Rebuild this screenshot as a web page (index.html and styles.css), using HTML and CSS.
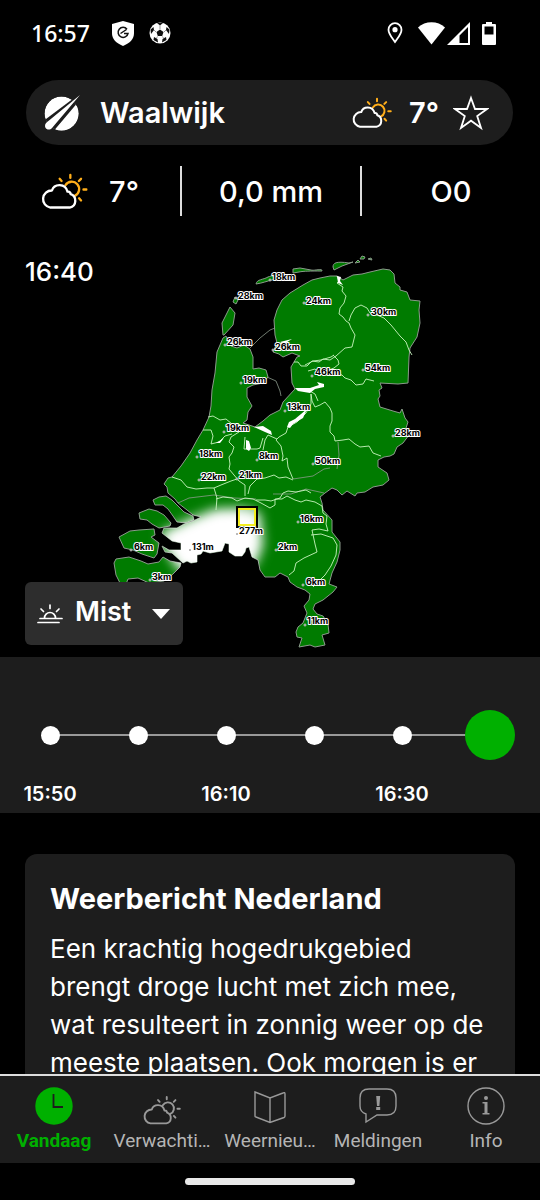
FILE: index.html
```html
<!DOCTYPE html>
<html lang="nl">
<head>
<meta charset="utf-8">
<meta name="viewport" content="width=device-width, initial-scale=1">
<title>Weer Waalwijk</title>
<link rel="stylesheet" href="styles.css">
</head>
<body>
<svg class="defs" aria-hidden="true">
  <symbol id="cloud-sun" viewBox="0 0 48 37">
    <g class="sun" fill="none" stroke-width="2.4" stroke-linecap="round"><path d="M25 12.5a7.6 7.6 0 1 1 9.500 11M30 2v3M19 6l2 2.200M41 6l-2.200 2.200M43.500 17h3M39 26l2 2.200"/></g>
    <path class="cloud" fill="none" stroke-width="2.4" stroke-linejoin="round" d="M9.500 35.500a8.800 8.800 0 0 1 1.600-17.500c2.300-7.500 13.800-7.800 16 1.200 2-.3 3 .6 3.300 2.600 6.500 2.200 6.300 12.500-1 13.700z"/>
  </symbol>
</svg>
<div class="app">
  <div class="status">
    <time class="status-time">16:57</time>
    <svg width="22" height="25" viewBox="0 0 22 25"><path fill="#fff" d="M11 0l11 3v9c0 6-4 10-11 13C4 22 0 18 0 12V3z"/><path d="M8.500 12.500l6-4M15 8.200A5 5 0 1 0 16 12.500H12" fill="none" stroke="#111" stroke-width="1.500"/></svg>
    <svg width="22" height="22" viewBox="0 0 22 22"><circle cx="11" cy="11" r="10.500" fill="#fff"/><path d="M11 7.500l3.500 2.600-1.300 4h-4.400L7.500 10.100zM8 1h6l-3 2.500zM1.500 7.500l3-2.500.5 3-3 4zM20.500 7.500l-3-2.500-.5 3 3 4zM4.500 18l.5-3 3.500 2 .5 3.500zM17.500 18l-.5-3-3.500 2-.5 3.500z" fill="#111"/><path d="M11 7V3.500M7 10L5 8M15 10l2-2M8.500 14.500L7 17M13.500 14.500L15 17" stroke="#555" stroke-width=".6"/></svg>
    <span class="spacer"></span>
    <svg width="16" height="22" viewBox="0 0 16 22"><path d="M8 1.200a6.500 6.500 0 0 0-6.500 6.500C1.500 12 5 15.500 8 20c3-4.500 6.500-8 6.500-12.300A6.500 6.500 0 0 0 8 1.200z" fill="none" stroke="#fff" stroke-width="1.800"/><circle cx="8" cy="7.700" r="2.600" fill="#fff"/></svg>
    <svg class="signals" width="52" height="23" viewBox="0 0 52 23"><path fill="#fff" d="M0 5.500C7-1.500 20-1.500 27 5.500L13.500 22.500z"/><path fill="#fff" fill-rule="evenodd" d="M52 0v23H29zM50 5L41.500 13.500V21H50z"/></svg>
    <svg width="14" height="23" viewBox="0 0 14 23"><path fill="#fff" fill-rule="evenodd" d="M4 0h6v2h3q1 0 1 1v19q0 1-1 1H1q-1 0-1-1V3q0-1 1-1h3zM2.500 4.500v8h9v-8z"/></svg>
  </div>

  <main class="content">
    <header class="place">
      <svg width="36" height="36" viewBox="0 0 36 36"><defs><clipPath id="globe"><circle cx="17.500" cy="18.500" r="17"/></clipPath></defs><g clip-path="url(#globe)"><circle cx="17.500" cy="18.500" r="17" fill="#fff"/><path d="M-2 27L34 0H40L8 38H-2z" fill="#1d1d1d"/><path d="M10 36L36 7V40H8z" fill="#fff"/></g><path d="M36 0L8 33C5.500 36 0 34.500 1.200 29.500 1.500 28 4 26.500 5 25.500z" fill="#fff"/></svg>
      <button class="place-name" type="button">Waalwijk</button>
      <svg class="icon-small" viewBox="0 0 48 37"><use href="#cloud-sun"/></svg>
      <span class="place-temp">7°</span>
      <button class="star" type="button" aria-label="Favoriet"><svg width="36" height="36" viewBox="0 0 36 36"><path d="M18 3l4 11h12l-9.800 7.100L28 33l-10-7.300L8 33l3.800-11.900L2 14h12z" fill="none" stroke="#fff" stroke-width="1.800"/></svg></button>
    </header>

    <section class="stats" aria-label="Actueel">
      <div class="stat stat-temp"><svg class="icon-large" viewBox="0 0 48 37"><use href="#cloud-sun"/></svg><span>7°</span></div>
      <div class="stat">0,0 mm</div>
      <div class="stat">O0</div>
    </section>

    <section class="map" aria-label="Zicht in Nederland">
      <time class="map-time">16:40</time>
      <svg class="map-art" viewBox="0 231 540 426">
        <defs>
          <path id="land" d="M223 338L226 336 231 346 237 348 244 345 250 349 253 357 253 369 259 368 266 370 268 377 263 383 253 385 247 388 247 397 252 406 248 412 247 420 243 423 255 427 263 421 270 415 280 410 283 402 295 389 292 383 291 367 297 357 300 356 292 353 283 357 279 354 273 352 277 343 275 335 274 320 277 310 282 300 290 293 303 285 312 280 320 278 330 276 337 276 343 280 353 275 362 274 370 272 383 269 390 270 394 274 395 283 400 287 400 290 407 292 410 300 420 301 419 310 420 323 417 337 410 348 409 357 408 383 398 384 380 383 382 388 379 390 380 396 378 399 380 407 393 411 400 413 402 409 405 418 408 422 406 428 409 435 403 443 397 447 394 454 390 456 384 457 378 460 378 467 387 473 389 480 383 485 373 487 365 492 357 493 355 496 347 491 342 495 337 490 332 488 325 493 320 497 322 503 323 510 332 520 332 532 340 542 340 550 337 562 332 573 329 584 337 587 333 592 323 600 315 604 313 609 317 614 323 616 328 624 329 633 322 635 325 645 315 647 310 645 299 647 302 638 297 637 296 632 298 627 303 623 307 613 304 606 309 600 310 594 305 590 297 587 290 582 288 577 280 573 275 577 265 577 260 570 258 560 252 557 249 547 246 548 245 552 242 556 235 556 229 552 229 544 225 543 222 551 210 553 203 551 201 554 197 555 197 562 191 563 187 561 183 563 172 553 165 552 162 546 169 550 181 550 181 543 172 541 167 537 162 533 164 528 177 528 184 524 193 521 201 517 193 515 187 510 178 503 175 499 168 493 167 487 164 484 168 478 172 477 181 466 190 453 197 440 203 430 209 417 211 406 212 390 215 373 217 352z"/>
          <path id="isles" d="M153 500l6-3 7-1 6 4 5 5 7 7 9 4 1 4-8 3-9-1-4-6-5-7-5-4-8 0zM139 513l10-4 8 2 7 4 7 8-1 3-11 2-7-4-5-4-7-1zM119 537l11-6 9-1 15-1 1 6-4 2 8 6-2 11-3 4-12-4-9-4-9-2zM114 563l2-4 13-2 12 4 7 3 11-2 4-5 7 4 11 2-1 4-7 7-9 7-15 2-11-5-10 1-2 5-6-1-4-8zM223 335l-1-12 8-16 5 6-2 12-9 10zM233 302l2-5 3 3-2 4zM256 284c1-5 7-4 12-7 3-1 14-5 16-1l-12 4c-5 1-9 3-16 4zM293 273v-4l7-1 11 2c3 1 12-2 11 1-12 0-18 0-23 1zM333 267c0-4 3-6 16-4l4-1-11 4-8 4zM355 263l3-3 2 2zM360 259l2-3 3 1-1 2zM368 259l3-1 1 2z"/>
          <clipPath id="ground"><use href="#land"/><use href="#isles"/></clipPath>
          <filter id="mist" x="-30%" y="-30%" width="160%" height="160%"><feGaussianBlur stdDeviation="6"/></filter>
        </defs>
        <g class="land"><use href="#land"/><use href="#isles"/></g>
        <g clip-path="url(#ground)"><path filter="url(#mist)" fill="#fff" d="M160 533L190 519 215 509 240 508 260 513 263 545 255 566 197 572 180 571 174 563 165 548z"/></g>
        <path class="edge" d="M250 348l10-10 10-8 5-2M267 377l9 4 4 10 1 5M273 494l18 0 15-5 18 4M293 479l20-3 11-7 6-1M338 442l1 13-2 14M178 503l11-5 25-3 20 3 22 1"/>
        <path class="border" d="M337 276l2 5-2 2 6 4-1 4 4 5-2 7-4 5-1 6 4 3 3 4 3 2 2 5 4 7-1 4-2 8-7 1-9 8-6 4-7-1-4 3-7-1-5 5-6 0-3-4-4 0M349 321l2-6 4-7 6-3 6 3 3 5 7 2 7 3 7 7 9 11 6 6 3 8 3 5M333 355l5 5 1 4-5 4-5 2 2 3 11 2 3 3 6 2 5 5 7-1 3-5 8 2M305 365l8-4 8-1 10-3 3-2M308 371l7-2 6 5M308 390l7 4 3 7M311 394l1 7 3 6 5-2 5-3 5 6 2 5 0 8-2 5 0 6 4 4 1 5 8-1 6-1 6 5 5 3 9-1 4 7 8 3M311 394l0 10-5 9-9 9-9 5-2 6-7 4-3 3 5 6 2 10-1 5 5-3 1 9 5 12M208 417l5-1 7 4 6-1 6 5 7 0 6 5M203 430l8 0 2 6-2 8 8-2 6-6 7-2M263 450l2-10 3-5 9 4M245 437l-1 12 13 0 3-1 3-10M239 432l-8 5-2 5 5 5-2 6-3 4 1 7-1 5 5 6 5 6 6 4 0 11M172 477l9 3 6 7 9 2 11-1 7 0 7-3 10-4 6-2M214 488l3 10-1 12M248 494l2-8 7-7 0-4M257 479l8-1 9-3 5 3 7-1 7 3M256 500l9 0 6 1 9-3 3-5 5-2 8 1 10-2 5 3M216 499l7-2 9 1 5 3 8-3 8 1 8 4 9 5 5-3 0-6 7 0 5-3 8 4 6 2 5-2 9 2 7 4 1 7 4 3-1 8 2 7-9-2-7 1 3 14 2 8-13 6-8 5-2 8-5 4M311 535l10-1 12 4 4 7-1 10-5 11-6 9-6 6-6 6"/>
        <path fill="#fff" d="M295 388l15 0 9-3-2-3 7 2 0 3-9 2-5 4-12-2zM254 427l9-1 8 5 1 4-7-3zM287 427l2-5 6-3 12-10-4 9-10 6-3 4zM246 440l3 1 2 7-2 3-3-2zM216 443l8-5-4 5zM337 276l4 1-1 4 3 4-5-2zM280 342l12-3-8 5z"/>
        <g class="cursor"><rect x="237" y="507" width="20" height="20" fill="#fff" fill-opacity=".45" stroke="#000" stroke-width="2"/><rect x="239" y="509" width="16" height="16"/></g>
        <g class="spots"><circle cx="270" cy="280" r="1"/><circle cx="236" cy="298" r="1"/><circle cx="304" cy="303" r="1"/><circle cx="368" cy="315" r="1"/><circle cx="225" cy="345" r="1"/><circle cx="273" cy="350" r="1"/><circle cx="363" cy="370" r="1"/><circle cx="312" cy="376" r="1"/><circle cx="241" cy="383" r="1"/><circle cx="285" cy="411" r="1"/><circle cx="224" cy="432" r="1"/><circle cx="393" cy="436" r="1"/><circle cx="197" cy="457" r="1"/><circle cx="257" cy="460" r="1"/><circle cx="313" cy="464" r="1"/><circle cx="199" cy="480" r="1"/><circle cx="237" cy="479" r="1"/><circle cx="298" cy="522" r="1"/><circle cx="237" cy="534" r="1"/><circle cx="131" cy="550" r="1"/><circle cx="190" cy="550" r="1"/><circle cx="276" cy="550" r="1"/><circle cx="303" cy="585" r="1"/><circle cx="150" cy="580" r="1"/><circle cx="305" cy="625" r="1"/></g>
        <g class="km">
          <text x="272" y="280">18km</text><text x="238" y="299">28km</text><text x="306" y="304">24km</text><text x="371" y="315">30km</text><text x="227" y="345">26km</text><text x="275" y="350">26km</text><text x="365" y="371">54km</text><text x="315" y="375">46km</text><text x="243" y="383">19km</text><text x="287" y="410">13km</text><text x="226" y="431">19km</text><text x="395" y="436">28km</text><text x="199" y="457">18km</text><text x="259" y="459">8km</text><text x="315" y="464">50km</text><text x="201" y="480">22km</text><text x="239" y="478">21km</text><text x="300" y="522">16km</text><text x="239" y="534">277m</text><text x="134" y="550">6km</text><text x="192" y="550">131m</text><text x="278" y="550">2km</text><text x="306" y="585">6km</text><text x="152" y="580">3km</text><text x="307" y="624">11km</text>
        </g>
      </svg>
      <div class="layer">
        <svg class="layer-icon" width="26" height="20" viewBox="0 0 26 20"><path d="M3 14.500h22M1 18.500h21M7.500 14a5.500 5.500 0 0 1 11 0M13 1v3.500M4 5l2.500 2.500M22 5l-2.500 2.500" fill="none" stroke="#fff" stroke-width="1.700" stroke-linecap="round"/></svg>
        <select class="layer-select" aria-label="Kaartlaag"><option>Mist</option></select>
        <svg class="layer-caret" width="18" height="10" viewBox="0 0 18 10"><path d="M0 0h18L9 10z" fill="#fff"/></svg>
      </div>
    </section>

    <fieldset class="timeline" aria-label="Tijdstip">
      <label class="step"><input type="radio" name="moment"><span>15:50</span></label>
      <label class="step"><input type="radio" name="moment" aria-label="16:00"></label>
      <label class="step"><input type="radio" name="moment"><span>16:10</span></label>
      <label class="step"><input type="radio" name="moment" aria-label="16:20"></label>
      <label class="step"><input type="radio" name="moment"><span>16:30</span></label>
      <label class="step"><input type="radio" name="moment" aria-label="16:40" checked></label>
    </fieldset>

    <article class="report">
      <h1>Weerbericht Nederland</h1>
      <p>Een krachtig hogedrukgebied brengt droge lucht met zich mee, wat resulteert in zonnig weer op de meeste plaatsen. Ook morgen is er</p>
    </article>
  </main>

  <nav class="tabs">
    <a class="tab active" href="#vandaag"><svg width="38" height="38" viewBox="0 0 38 38"><circle cx="19" cy="19" r="18.700" fill="#00b000"/><path d="M18.500 7v13H28" fill="none" stroke="#1d1d1d" stroke-width="1.800"/></svg><span>Vandaag</span></a>
    <a class="tab" href="#verwachting"><svg class="gray" width="38" height="38" viewBox="0 -5 48 48"><use href="#cloud-sun"/></svg><span>Verwachti…</span></a>
    <a class="tab" href="#weernieuws"><svg width="38" height="38" viewBox="0 0 38 38"><path d="M4 5l15 6 13-5q2-1 2 1v22q0 1-1 1.500l-14 5L5 30q-1 0-1-1zM19 11v24" fill="none" stroke="#999" stroke-width="1.400"/></svg><span>Weernieu…</span></a>
    <a class="tab" href="#meldingen"><svg width="38" height="38" viewBox="0 0 38 38"><path d="M10 2h18q9 0 9 9v8q0 9-9 9H18L7 35V27Q1 25 1 19v-8q0-9 9-9z" fill="none" stroke="#999" stroke-width="1.400"/><path d="M17.200 9h4l-.8 10h-2.400zM17.200 20h4v3h-4z" fill="#999"/></svg><span>Meldingen</span></a>
    <a class="tab" href="#info"><svg width="38" height="38" viewBox="0 0 38 38"><circle cx="19" cy="19" r="18" fill="none" stroke="#999" stroke-width="1.400"/><circle cx="19" cy="11" r="2" fill="#999"/><path d="M15.500 15h5v11h2v1.500h-7V26h2v-9.500h-2z" fill="#999"/></svg><span>Info</span></a>
  </nav>
  <div class="gesture"><span></span></div>
</div>
</body>
</html>
```

FILE: styles.css
```css
* { box-sizing: border-box; }

body {
  margin: 0;
  background: #000;
  color: #fff;
  font-family: Inter, "Liberation Sans", sans-serif;
}

button, select {
  padding: 0;
  border: 0;
  background: none;
  color: inherit;
  font: inherit;
}

.defs { position: absolute; width: 0; height: 0; }

.app {
  --sun: #ffae1a;
  --cloud: #fff;
  display: flex;
  flex-direction: column;
  height: 100vh;
}

.content {
  flex: 1;
  min-height: 0;
  overflow-y: auto;
  scrollbar-width: none;
}

.status {
  display: flex;
  align-items: center;
  gap: 15px;
  height: 80px;
  padding: 0 44px 14px 31px;
}
.status-time {
  margin-right: 7px;
  font-family: "Noto Sans", sans-serif;
  font-size: 23px;
  font-weight: 500;
}
.spacer { flex: 1; }
.signals { margin-right: -3px; }

.place {
  display: flex;
  align-items: center;
  height: 65px;
  margin: 0 27px 0 26px;
  padding: 0 24px 0 18px;
  border-radius: 33px;
  background: #1d1d1d;
  font-size: 29px;
  font-weight: 600;
}
.place-name {
  flex: 1;
  margin-left: 20px;
  text-align: left;
}
.place-temp { margin: 0 14px 0 17px; }
.star { display: flex; }
.icon-small { width: 40px; height: 31px; }
.icon-large { width: 47px; height: 36px; }
.sun { stroke: var(--sun); }
.cloud { stroke: var(--cloud); }
.gray { --sun: #999; --cloud: #999; }

.stats {
  display: grid;
  grid-template-columns: repeat(3, 1fr);
  margin-top: 21px;
}
.stat {
  display: flex;
  align-items: center;
  justify-content: center;
  height: 50px;
  font-size: 29px;
  font-weight: 500;
}
.stat + .stat { border-left: 2px solid #ddd; }
.stat-temp { gap: 21px; }

.map {
  position: relative;
  margin-top: 15px;
}
.map-art { display: block; width: 100%; }
.map-time {
  position: absolute;
  top: 26px;
  left: 25px;
  font-size: 26px;
  line-height: 30px;
  font-weight: 500;
}
.land { fill: #007b00; stroke: #8b9a8b; stroke-width: 1; stroke-linejoin: round; }
.edge { fill: none; stroke: #8b9a8b; stroke-width: .8; }
.border { fill: none; stroke: #c9f5c0; stroke-width: .9; stroke-linejoin: round; }
.cursor rect + rect { fill: none; stroke: #f4ee20; stroke-width: 2; }
.spots { fill: #000; stroke: #fff; stroke-width: .8; }
.km {
  fill: #000;
  stroke: #fff;
  stroke-width: 2px;
  stroke-linejoin: round;
  paint-order: stroke;
  font-size: 9px;
  font-weight: 700;
}

.layer {
  position: absolute;
  left: 25px;
  bottom: 12px;
  display: grid;
  align-items: center;
  width: 158px;
  height: 63px;
  border-radius: 6px;
  background: #2d2d2d;
}
.layer > * { grid-area: 1 / 1; }
.layer-icon { margin-left: 12px; }
.layer-caret { justify-self: end; margin-right: 13px; pointer-events: none; }
.layer-select {
  height: 60px;
  padding: 0 0 4px 50px;
  appearance: none;
  font-size: 27px;
  font-weight: 600;
}

.timeline {
  display: grid;
  grid-template-columns: repeat(6, 1fr);
  height: 156px;
  margin: 0;
  padding: 53px 6px 0;
  border: 0;
  background: #1d1d1d;
}
.step {
  position: relative;
  display: flex;
  flex-direction: column;
  align-items: center;
  gap: 21px;
  font-size: 20px;
  line-height: 26px;
  font-weight: 600;
}
.step + .step::before {
  content: "";
  position: absolute;
  top: 24px;
  right: 50%;
  width: 100%;
  height: 2px;
  background: #999;
}
.step input {
  position: relative;
  z-index: 1;
  width: 19px;
  height: 19px;
  margin: 16px 0 15px;
  appearance: none;
  border-radius: 50%;
  background: #fff;
}
.step input:checked {
  width: 50px;
  height: 50px;
  margin: 0;
  background: #00b000;
}

.report {
  min-height: 260px;
  margin: 41px 25px 0;
  padding: 25px;
  border-radius: 12px;
  background: #1d1d1d;
}
.report h1 {
  margin: 0;
  font-size: 29px;
  line-height: 40px;
  font-weight: 700;
}
.report p {
  margin: 11px 0 0;
  font-size: 26px;
  line-height: 38px;
}

.tabs {
  display: grid;
  grid-template-columns: repeat(5, 1fr);
  height: 89px;
  border-top: 2px solid #ddd;
  background: #1d1d1d;
  font-family: Roboto, sans-serif;
  font-size: 19px;
}
.tab {
  display: flex;
  flex-direction: column;
  align-items: center;
  gap: 4px;
  min-width: 0;
  padding-top: 11px;
  color: #b5b5b5;
  line-height: 24px;
  text-decoration: none;
  white-space: nowrap;
}
.active { color: #00b000; font-weight: 700; }

.gesture {
  display: flex;
  justify-content: center;
  align-items: center;
  height: 37px;
}
.gesture span {
  width: 170px;
  height: 7px;
  border-radius: 4px;
  background: #e8e8e8;
}
```
